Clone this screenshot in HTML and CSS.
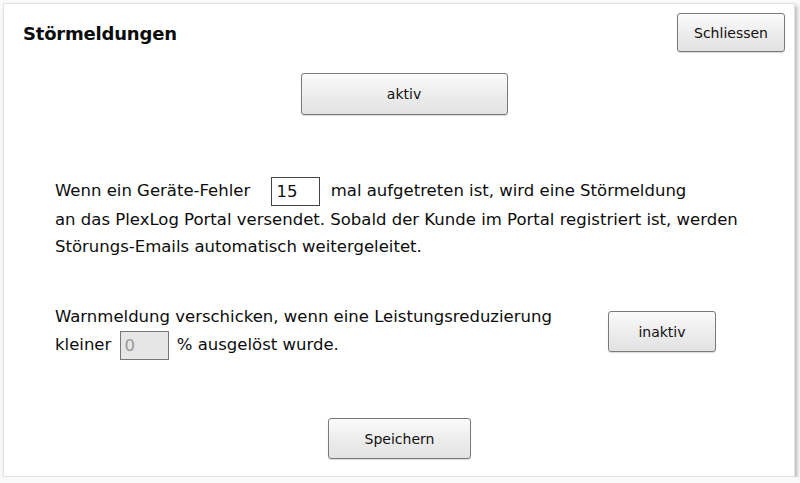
FILE: index.html
```html
<!DOCTYPE html>
<html lang="de">
<head>
<meta charset="UTF-8">
<title>Störmeldungen</title>
<link rel="stylesheet" href="styles.css">
</head>
<body>
<div class="panel">
  <div class="head">
    <h1>Störmeldungen</h1>
    <button class="btn btn-close">Schliessen</button>
  </div>
  <div class="row-center">
    <button class="btn btn-toggle">aktiv</button>
  </div>

  <p class="text first">Wenn ein Geräte-Fehler <input class="num" type="text" value="15"> mal aufgetreten ist, wird eine Störmeldung<br>
  an das PlexLog Portal versendet. Sobald der Kunde im Portal registriert ist, werden<br>
  Störungs-Emails automatisch weitergeleitet.</p>

  <div class="warn">
    <p class="text">Warnmeldung verschicken, wenn eine Leistungsreduzierung<br>
    kleiner <input class="num small" type="text" value="0" disabled> % ausgelöst wurde.</p>
    <button class="btn btn-off">inaktiv</button>
  </div>

  <div class="row-center foot">
    <button class="btn btn-save">Speichern</button>
  </div>
</div>
</body>
</html>
```

FILE: styles.css
```css
html,body{margin:0;background:#fafafa;}
body{font-family:"DejaVu Sans",Verdana,sans-serif;color:#0c0c0c;}

.panel{margin:3px 0 0 3px;width:792px;height:474px;background:#fff;border:1px solid #e2e2e2;box-sizing:border-box;box-shadow:2px 3px 4px rgba(0,0,0,.28);}

.head{display:flex;justify-content:space-between;align-items:flex-start;padding:9px 9px 0 19px;}
h1{margin:10px 0 0;font-size:18px;font-weight:bold;letter-spacing:-.2px;}

.btn{font-family:inherit;font-size:14px;color:#111;background:linear-gradient(#fbfbfb,#ececec 55%,#e2e2e2);border:1px solid #7a7a7a;border-radius:3px;box-shadow:0 1px 1px rgba(0,0,0,.15);padding:0;}
.btn-close{width:108px;height:39px;}
.row-center{display:flex;justify-content:center;}
.btn-toggle{width:207px;height:42px;margin:21px 0 0 10px;}

.text{margin:0;font-size:16.5px;line-height:27px;}
.first{margin:62px 0 0 51px;}

.num{width:49px;height:29px;box-sizing:border-box;border:1px solid #444;font-family:inherit;font-size:16.5px;padding:2px 4px;margin:0 5px 0 16px;vertical-align:middle;background:#fff;color:#111;}
.num.small{background:#e6e6e6;border-color:#777;color:#999;margin:0 3px 0 3px;}

.warn{display:flex;align-items:center;margin:43px 0 0 51px;}
.warn .text{line-height:28px;}
.btn-off{width:108px;height:41px;margin-left:56px;}

.foot{margin-top:58px;}
.btn-save{width:143px;height:41px;margin-left:1px;}
```
